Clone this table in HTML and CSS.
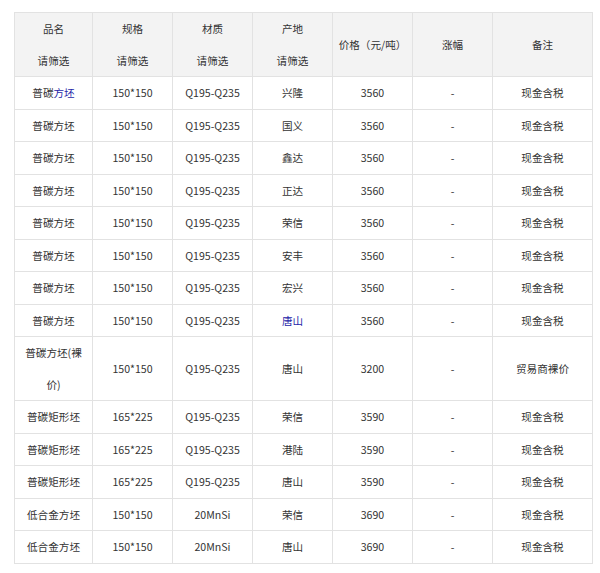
FILE: index.html
```html
<!DOCTYPE html>
<html lang="zh-CN">
<head>
<meta charset="utf-8">
<title>价格表</title>
<link rel="stylesheet" href="styles.css">
</head>
<body>
<table class="price-table">
  <colgroup>
    <col class="c-name"><col class="c-std"><col class="c-std"><col class="c-std"><col class="c-std"><col class="c-std"><col class="c-note">
  </colgroup>
  <thead>
    <tr>
      <th><div>品名</div><div>请筛选</div></th>
      <th><div>规格</div><div>请筛选</div></th>
      <th><div>材质</div><div>请筛选</div></th>
      <th><div>产地</div><div>请筛选</div></th>
      <th>价格（元/吨）</th>
      <th>涨幅</th>
      <th>备注</th>
    </tr>
  </thead>
  <tbody>
    <tr><td>普碳<span class="link">方坯</span></td><td>150*150</td><td>Q195-Q235</td><td>兴隆</td><td>3560</td><td>-</td><td>现金含税</td></tr>
    <tr><td>普碳方坯</td><td>150*150</td><td>Q195-Q235</td><td>国义</td><td>3560</td><td>-</td><td>现金含税</td></tr>
    <tr><td>普碳方坯</td><td>150*150</td><td>Q195-Q235</td><td>鑫达</td><td>3560</td><td>-</td><td>现金含税</td></tr>
    <tr><td>普碳方坯</td><td>150*150</td><td>Q195-Q235</td><td>正达</td><td>3560</td><td>-</td><td>现金含税</td></tr>
    <tr><td>普碳方坯</td><td>150*150</td><td>Q195-Q235</td><td>荣信</td><td>3560</td><td>-</td><td>现金含税</td></tr>
    <tr><td>普碳方坯</td><td>150*150</td><td>Q195-Q235</td><td>安丰</td><td>3560</td><td>-</td><td>现金含税</td></tr>
    <tr><td>普碳方坯</td><td>150*150</td><td>Q195-Q235</td><td>宏兴</td><td>3560</td><td>-</td><td>现金含税</td></tr>
    <tr><td>普碳方坯</td><td>150*150</td><td>Q195-Q235</td><td><span class="link">唐山</span></td><td>3560</td><td>-</td><td>现金含税</td></tr>
    <tr><td>普碳方坯(裸<br>价)</td><td>150*150</td><td>Q195-Q235</td><td>唐山</td><td>3200</td><td>-</td><td>贸易商裸价</td></tr>
    <tr><td>普碳矩形坯</td><td>165*225</td><td>Q195-Q235</td><td>荣信</td><td>3590</td><td>-</td><td>现金含税</td></tr>
    <tr><td>普碳矩形坯</td><td>165*225</td><td>Q195-Q235</td><td>港陆</td><td>3590</td><td>-</td><td>现金含税</td></tr>
    <tr><td>普碳矩形坯</td><td>165*225</td><td>Q195-Q235</td><td>唐山</td><td>3590</td><td>-</td><td>现金含税</td></tr>
    <tr><td>低合金方坯</td><td>150*150</td><td>20MnSi</td><td>荣信</td><td>3690</td><td>-</td><td>现金含税</td></tr>
    <tr><td>低合金方坯</td><td>150*150</td><td>20MnSi</td><td>唐山</td><td>3690</td><td>-</td><td>现金含税</td></tr>
  </tbody>
</table>
</body>
</html>
```

FILE: styles.css
```css
html, body {
  margin: 0;
  padding: 0;
  background: #ffffff;
}

body {
  padding: 12px 0 0 14px;
  font-family: "Noto Sans CJK SC", "Microsoft YaHei", sans-serif;
  font-size: 10.6px;
  color: #333333;
}

.price-table {
  border-collapse: collapse;
  table-layout: fixed;
  width: 579px;
}

.c-name { width: 78px; }
.c-std { width: 80px; }
.c-note { width: 100px; }

.price-table th,
.price-table td {
  border: 1px solid #e2e2e2;
  padding: 0;
  text-align: center;
  vertical-align: middle;
  line-height: 31.5px;
  font-weight: normal;
}

.price-table th {
  background: #f3f3f3;
  color: #333333;
}

.link {
  color: #2626a8;
}
```
